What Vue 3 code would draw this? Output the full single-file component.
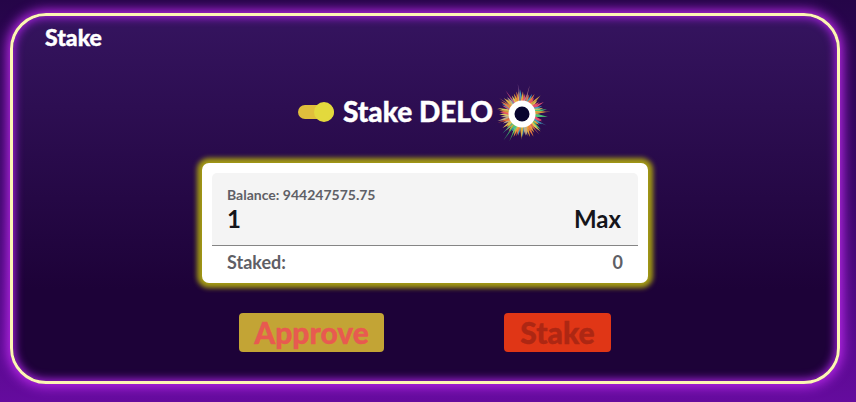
<template>
  <div class="page">
    <section class="panel">
      <h1 class="heading">Stake</h1>

      <div class="title-row">
        <span class="toggle"><span class="knob"></span></span>
        <h2 class="title">Stake DELO</h2>
        <svg class="burst" width="56" height="62" viewBox="0 0 56 62">
          <g class="rays">
            <polygon
              v-for="(ray, i) in rays"
              :key="i"
              :points="ray.points"
              :fill="ray.color"
              :opacity="ray.opacity"
            />
          </g>
          <circle cx="28" cy="33" r="13.5" fill="#fff" />
          <circle cx="28" cy="33" r="7.5" fill="#08052e" />
        </svg>
      </div>

      <div class="card">
        <div class="input-box">
          <div class="balance">Balance: 944247575.75</div>
          <div class="amount-row">
            <span>1</span>
            <span>Max</span>
          </div>
        </div>
        <div class="staked-row">
          <span>Staked:</span>
          <span>0</span>
        </div>
      </div>

      <div class="actions">
        <button class="btn approve">Approve</button>
        <button class="btn stake">Stake</button>
      </div>
    </section>
  </div>
</template>

<script setup>
// mostly warm colours in the logo, with some pink, green and blue
const colors = ['#f0a838', '#f0a838', '#e8c850', '#f08040', '#e0d060', '#e85070', '#48c878', '#40a8c0', '#c8b088']

// simple repeatable pseudo random so the rays stay the same on every load
let seed = 11
function rnd() {
  seed = (seed * 16807) % 2147483647
  return (seed % 1000) / 1000
}

function wedge(deg, len, spread, color, opacity) {
  const a = (deg * Math.PI) / 180
  const p = (ang, r) => `${(28 + Math.cos(ang) * r).toFixed(1)},${(33 + Math.sin(ang) * r).toFixed(1)}`
  return { points: `${p(a - spread, 11)} ${p(a + spread, 11)} ${p(a, len)}`, color, opacity }
}

const rays = []
// wide short ones fill in the body of the burst
for (let i = 0; i < 60; i++) {
  const deg = (i / 60) * 360 + rnd() * 5
  rays.push(wedge(deg, 20 + rnd() * 6, 0.2, colors[Math.floor(rnd() * colors.length)], 0.95))
}
// the long thin ones that stick out past the rest
const spikes = [
  [125, 32, '#40d070'], [115, 30, '#50e060'], [135, 28, '#40c090'], [92, 26, '#d0b040'],
  [262, 31, '#8a5a90'], [285, 30, '#a06a80'], [235, 29, '#e05080'], [215, 28, '#d08050'],
  [355, 29, '#d09040'], [25, 27, '#4090b0'], [50, 27, '#d06060'], [190, 26, '#c09040'],
  [315, 27, '#c0a050'], [160, 26, '#e06030']
]
for (const s of spikes) rays.push(wedge(s[0], s[1], 0.09, s[2], 0.85))
</script>

<style>
html, body {
  margin: 0;
  background: #2a0650;
}
</style>

<style scoped>
.page {
  box-sizing: border-box;
  width: 856px;
  height: 402px;
  padding: 13px 16px 18px 10px;
  overflow: hidden;
  background: linear-gradient(180deg, #250548 0%, #3a0768 50%, #650b9e 100%);
  font-family: "Lato", "Open Sans", sans-serif;
}
.panel {
  box-sizing: border-box;
  height: 371px;
  border: 3px solid #fdf6b4;
  border-radius: 36px;
  background: linear-gradient(180deg, #35145f 0%, #1d0238 75%, #1d0238 100%);
  box-shadow: 0 0 12px 3px #b828e8, inset 0 0 9px 2px #a020d8;
  display: flex;
  flex-direction: column;
  align-items: center;
}
.heading {
  align-self: flex-start;
  margin: 9px 0 0 32px;
  font-size: 23px;
  line-height: 25px;
  font-weight: 900;
  -webkit-text-stroke: 0.4px currentColor;
  color: #fff;
}
.title-row {
  display: flex;
  align-items: center;
  height: 62px;
  margin-top: 29px;
  margin-left: -2px;
}
.toggle {
  display: flex;
  justify-content: flex-end;
  align-items: center;
  width: 36px;
  height: 14px;
  border-radius: 7px;
  background: #e0bf3c;
  margin-top: 3px;
}
.knob {
  width: 20px;
  height: 20px;
  flex: none;
  border-radius: 50%;
  background: #e3d93d;
}
.title {
  margin: 1px 0 0 9px;
  font-size: 28px;
  line-height: 30px;
  font-weight: 900;
  -webkit-text-stroke: 0.4px currentColor;
  color: #fff;
}
.burst {
  margin-left: 1px;
  margin-top: 3px;
}
.rays {
  filter: blur(0.4px);
}
.card {
  box-sizing: border-box;
  width: 446px;
  height: 120px;
  margin-top: 22px;
  padding: 10px;
  border-radius: 7px;
  background: #fff;
  box-shadow: 0 0 5px 5px #a39a14;
}
.input-box {
  box-sizing: border-box;
  height: 73px;
  padding: 14px 17px 0 15px;
  background: #f4f4f4;
  border-radius: 5px 5px 0 0;
  border-bottom: 1px solid #858585;
}
.balance {
  font-size: 14px;
  line-height: 16px;
  font-weight: 700;
  color: #5f5f66;
}
.amount-row {
  display: flex;
  justify-content: space-between;
  margin-top: 3px;
  font-size: 24px;
  line-height: 26px;
  font-weight: 700;
  color: #15151a;
}
.staked-row {
  display: flex;
  justify-content: space-between;
  padding: 6px 15px 0;
  font-size: 18px;
  line-height: 20px;
  font-weight: 700;
  color: #5f5f66;
}
.actions {
  align-self: flex-start;
  display: flex;
  gap: 120px;
  margin: 30px 0 0 226px;
}
.btn {
  height: 39px;
  padding: 0;
  border: none;
  border-radius: 4px;
  font-family: inherit;
  font-size: 30px;
  line-height: 39px;
  font-weight: 900;
  -webkit-text-stroke: 0.4px currentColor;
}
.approve {
  width: 145px;
  background: #c3a435;
  color: #e85a50;
}
.stake {
  width: 107px;
  background: #e03616;
  color: #ad2713;
}
</style>
